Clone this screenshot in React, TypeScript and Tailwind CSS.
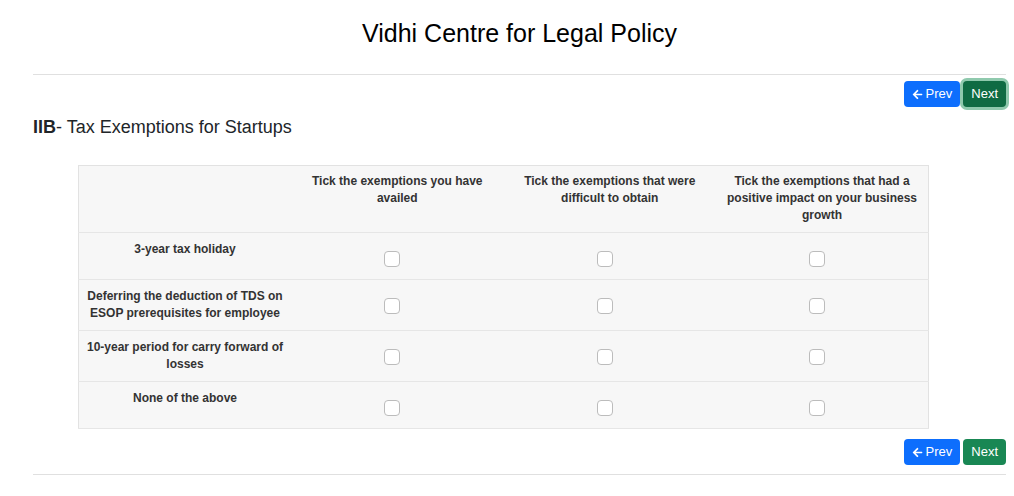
import { FaArrowLeft } from 'react-icons/fa';

const columns = [
  'Tick the exemptions you have availed',
  'Tick the exemptions that were difficult to obtain',
  'Tick the exemptions that had a positive impact on your business growth',
];

const rows = [
  '3-year tax holiday',
  'Deferring the deduction of TDS on ESOP prerequisites for employee',
  '10-year period for carry forward of losses',
  'None of the above',
];

const NavButtons = ({ focused }: { focused?: boolean }) => (
  <div className="flex justify-end gap-[3px]">
    <button className="flex h-[26px] items-center gap-[3px] rounded-[4px] bg-[#0d6efd] px-[8px] text-[13px] text-white">
      <FaArrowLeft className="h-[11px] w-[11px]" />
      Prev
    </button>
    <button
      className={`h-[26px] rounded-[4px] px-[8px] text-[13px] text-white ${
        focused ? 'bg-[#0f6b43] ring-[3px] ring-[#8fc9ad]' : 'bg-[#198754]'
      }`}
    >
      Next
    </button>
  </div>
);

export default function App() {
  return (
    <div className="min-h-[496px] bg-white font-['Liberation_Sans',Arial,sans-serif] text-[#212529]">
      <div className="ml-[33px] w-[973px]">
        <h1 className="pt-[19px] pb-[26px] text-center text-[25px] leading-[29px] text-black">
          Vidhi Centre for Legal Policy
        </h1>
        <div className="border-t border-[#e0e0e0]" />

        <div className="mt-[6px]">
          <NavButtons focused />
        </div>

        <h2 className="mt-[9px] text-[18px] leading-[22px]">
          <span className="font-bold">IIB</span>- Tax Exemptions for Startups
        </h2>

        <table className="mt-[27px] ml-[45px] w-[851px] table-fixed border-collapse border border-[#e2e2e2] bg-[#f7f7f7] text-[12px] leading-[17px] font-bold text-[#333]">
          <thead>
            <tr className="border-b border-[#e6e6e6]">
              <th className="p-2" />
              {columns.map((c) => (
                <th key={c} className="px-[8px] pt-[7px] pb-[8px] align-top font-bold">
                  {c}
                </th>
              ))}
            </tr>
          </thead>
          <tbody>
            {rows.map((r) => (
              <tr key={r} className="border-b border-[#e6e6e6]">
                <td className="px-[4px] pt-[8px] pb-[8px] text-center align-top">{r}</td>
                {columns.map((c) => (
                  <td key={c} className="p-[8px] align-top">
                    <div className="mt-[10px] mb-[4px] flex justify-center pr-[10px]">
                      <span className="block h-[16px] w-[16px] rounded-[4px] border border-[#bcbcbc] bg-white" />
                    </div>
                  </td>
                ))}
              </tr>
            ))}
          </tbody>
        </table>

        <div className="mt-[10px]">
          <NavButtons />
        </div>
        <div className="mt-[9px] border-t border-[#e0e0e0]" />
      </div>
    </div>
  );
}
